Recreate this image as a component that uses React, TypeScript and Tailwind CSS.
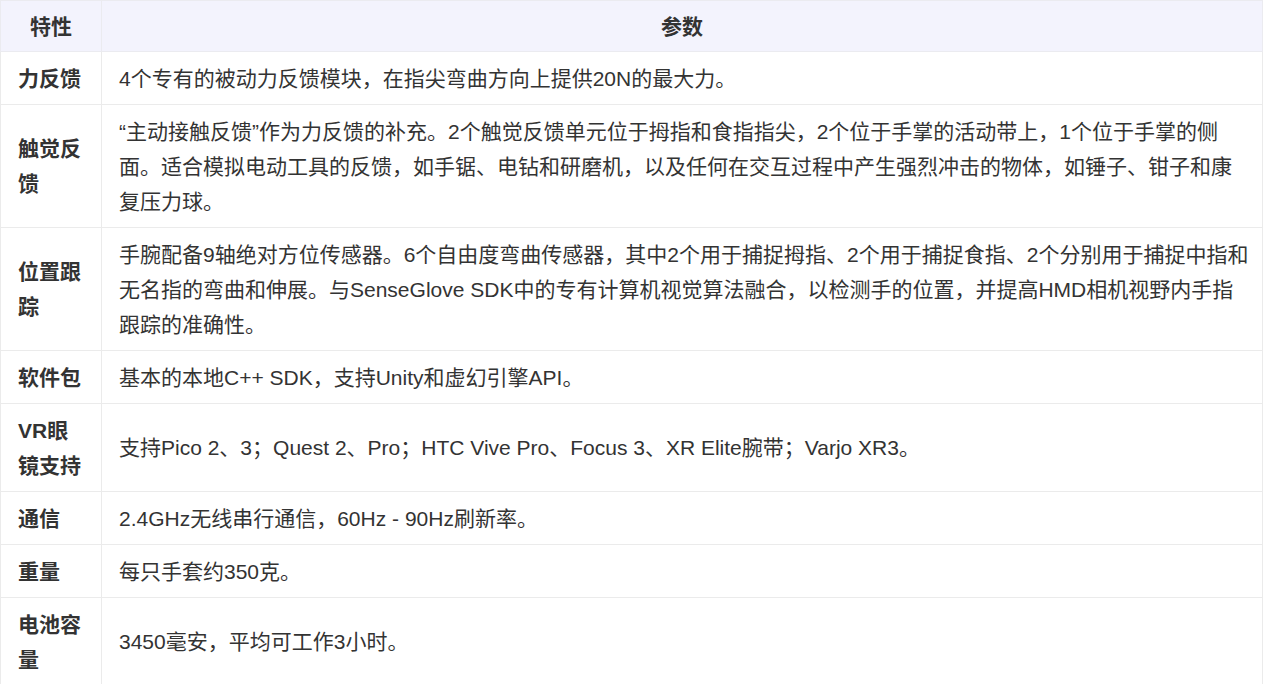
const ROWS: { name: string; value: string }[] = [
  { name: "力反馈", value: "4个专有的被动力反馈模块，在指尖弯曲方向上提供20N的最大力。" },
  {
    name: "触觉反馈",
    value:
      "“主动接触反馈”作为力反馈的补充。2个触觉反馈单元位于拇指和食指指尖，2个位于手掌的活动带上，1个位于手掌的侧面。适合模拟电动工具的反馈，如手锯、电钻和研磨机，以及任何在交互过程中产生强烈冲击的物体，如锤子、钳子和康复压力球。",
  },
  {
    name: "位置跟踪",
    value:
      "手腕配备9轴绝对方位传感器。6个自由度弯曲传感器，其中2个用于捕捉拇指、2个用于捕捉食指、2个分别用于捕捉中指和无名指的弯曲和伸展。与SenseGlove SDK中的专有计算机视觉算法融合，以检测手的位置，并提高HMD相机视野内手指跟踪的准确性。",
  },
  { name: "软件包", value: "基本的本地C++ SDK，支持Unity和虚幻引擎API。" },
  { name: "VR眼镜支持", value: "支持Pico 2、3；Quest 2、Pro；HTC Vive Pro、Focus 3、XR Elite腕带；Varjo XR3。" },
  { name: "通信", value: "2.4GHz无线串行通信，60Hz - 90Hz刷新率。" },
  { name: "重量", value: "每只手套约350克。" },
  { name: "电池容量", value: "3450毫安，平均可工作3小时。" },
];

export default function App() {
  return (
    <div className="bg-white min-h-screen font-['Liberation_Sans','Noto_Sans_CJK_SC',sans-serif] text-[21px] leading-[35px] text-[#333]">
      <table className="w-[1263px] border-collapse table-fixed">
        <colgroup>
          <col className="w-[101px]" />
          <col />
        </colgroup>
        <thead>
          <tr className="bg-[#f3f3fd]">
            <th className="border border-[#ebebf0] px-[17px] py-[7.5px] font-bold text-center text-[#333]">特性</th>
            <th className="border border-[#ebebf0] px-[17px] py-[7.5px] font-bold text-center text-[#333]">参数</th>
          </tr>
        </thead>
        <tbody>
          {ROWS.map((row) => (
            <tr key={row.name}>
              <td className="border border-[#ebebeb] px-[17px] py-[8.5px] align-middle font-bold text-[#333]">
                {row.name}
              </td>
              <td className="border border-[#ebebeb] pl-[17px] pr-[12px] py-[8.5px] align-middle text-[#333]">
                {row.value}
              </td>
            </tr>
          ))}
        </tbody>
      </table>
    </div>
  );
}
